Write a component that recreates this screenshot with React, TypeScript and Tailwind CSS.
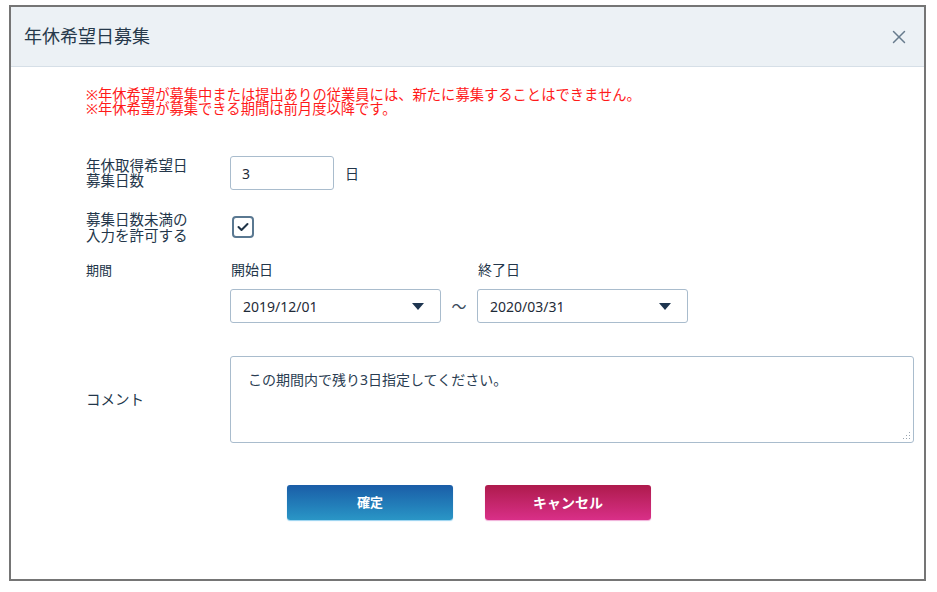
import { X } from 'lucide-react';

const font = { fontFamily: '"Noto Sans", "Noto Sans CJK JP", sans-serif' };

function Select({ value }: { value: string }) {
  return (
    <div className="flex h-[34px] w-[211px] items-center justify-between rounded-[3px] border border-[#a9bccd] bg-white pl-[12px] pr-[16px] text-[14px] text-[#1f2b38]">
      <span>{value}</span>
      <svg width="12" height="7" viewBox="0 0 12 7">
        <path d="M0 0 L12 0 L6 7 Z" fill="#1e3550" />
      </svg>
    </div>
  );
}

export default function App() {
  return (
    <div className="h-[592px] w-[937px] bg-white pl-[9px] pt-[5px]" style={font}>
      <div className="flex h-[576px] w-[917px] flex-col border-2 border-[#757575] bg-white">
        {/* Header */}
        <div className="flex h-[60px] items-center justify-between border-b border-[#d6dfe7] bg-[#ecf1f5] pl-[13px] pr-[14px]">
          <h1 className="text-[18px] text-[#27394b]">年休希望日募集</h1>
          <X className="h-[22px] w-[22px] text-[#687b8d]" strokeWidth={1.6} />
        </div>

        {/* Body */}
        <div className="flex flex-col pl-[75px] pt-[21px] text-[14px] text-[#23364a]">
          <div className="text-[14.3px] leading-[14px] text-[#ff1a1a]">
            <p>※年休希望が募集中または提出ありの従業員には、新たに募集することはできません。</p>
            <p>※年休希望が募集できる期間は前月度以降です。</p>
          </div>

          <div className="mt-[40px] flex items-center">
            <div className="w-[144px] text-[14.5px] leading-[15px]">
              年休取得希望日
              <br />
              募集日数
            </div>
            <div className="flex h-[34px] w-[104px] items-center rounded-[3px] border border-[#a9bccd] pl-[11px] text-[14px] text-[#1f2b38]">
              3
            </div>
            <span className="ml-[11px] text-[14px]">日</span>
          </div>

          <div className="mt-[21px] flex items-center">
            <div className="w-[144px] text-[14.5px] leading-[16px]">
              募集日数未満の
              <br />
              入力を許可する
            </div>
            <div className="ml-[2px] flex h-[22px] w-[22px] items-center justify-center rounded-[4px] border-2 border-[#5a7891] bg-white">
              <svg width="12" height="10" viewBox="0 0 12 10">
                <path d="M1.5 5 L4.5 8 L10.5 2" fill="none" stroke="#1f3347" strokeWidth="2" strokeLinecap="round" strokeLinejoin="round" />
              </svg>
            </div>
          </div>

          <div className="mt-[19px] flex">
            <div className="w-[144px] text-[13px] leading-[16px]">期間</div>
            <div className="flex flex-col">
              <div className="flex leading-[16px]">
                <span className="ml-[1px] w-[247px] text-[14px]">開始日</span>
                <span className="text-[14px]">終了日</span>
              </div>
              <div className="mt-[11px] flex items-center">
                <Select value="2019/12/01" />
                <span className="w-[36px] text-center text-[15px] text-[#3b4b5b]">〜</span>
                <Select value="2020/03/31" />
              </div>
            </div>
          </div>

          <div className="mt-[33px] flex items-center">
            <div className="w-[144px] text-[14.5px]">コメント</div>
            <div className="relative h-[87px] w-[684px] rounded-[3px] border border-[#a9bccd] pl-[17px] pt-[12px] text-[14px] text-[#2a3d52]">
              この期間内で残り3日指定してください。
              <svg className="absolute bottom-[2px] right-[2px]" width="8" height="8" viewBox="0 0 8 8">
                <g fill="#9aa5b0">
                  <rect x="6" y="0" width="1" height="1" />
                  <rect x="6" y="3" width="1" height="1" />
                  <rect x="3" y="3" width="1" height="1" />
                  <rect x="6" y="6" width="1" height="1" />
                  <rect x="3" y="6" width="1" height="1" />
                  <rect x="0" y="6" width="1" height="1" />
                </g>
              </svg>
            </div>
          </div>
        </div>

        <div className="mt-[42px] flex justify-center gap-[32px] pl-[3px]">
          <button className="h-[35px] w-[166px] rounded-[3px] bg-gradient-to-b from-[#1b5da7] to-[#2a96c6] text-[13px] font-bold text-white shadow-[0_1px_1px_rgba(80,180,230,0.6)]">
            確定
          </button>
          <button className="h-[35px] w-[166px] rounded-[3px] bg-gradient-to-b from-[#ae1a4c] to-[#d92f88] text-[14px] font-bold text-white shadow-[0_1px_1px_rgba(230,120,190,0.6)]">
            キャンセル
          </button>
        </div>
      </div>
    </div>
  );
}
